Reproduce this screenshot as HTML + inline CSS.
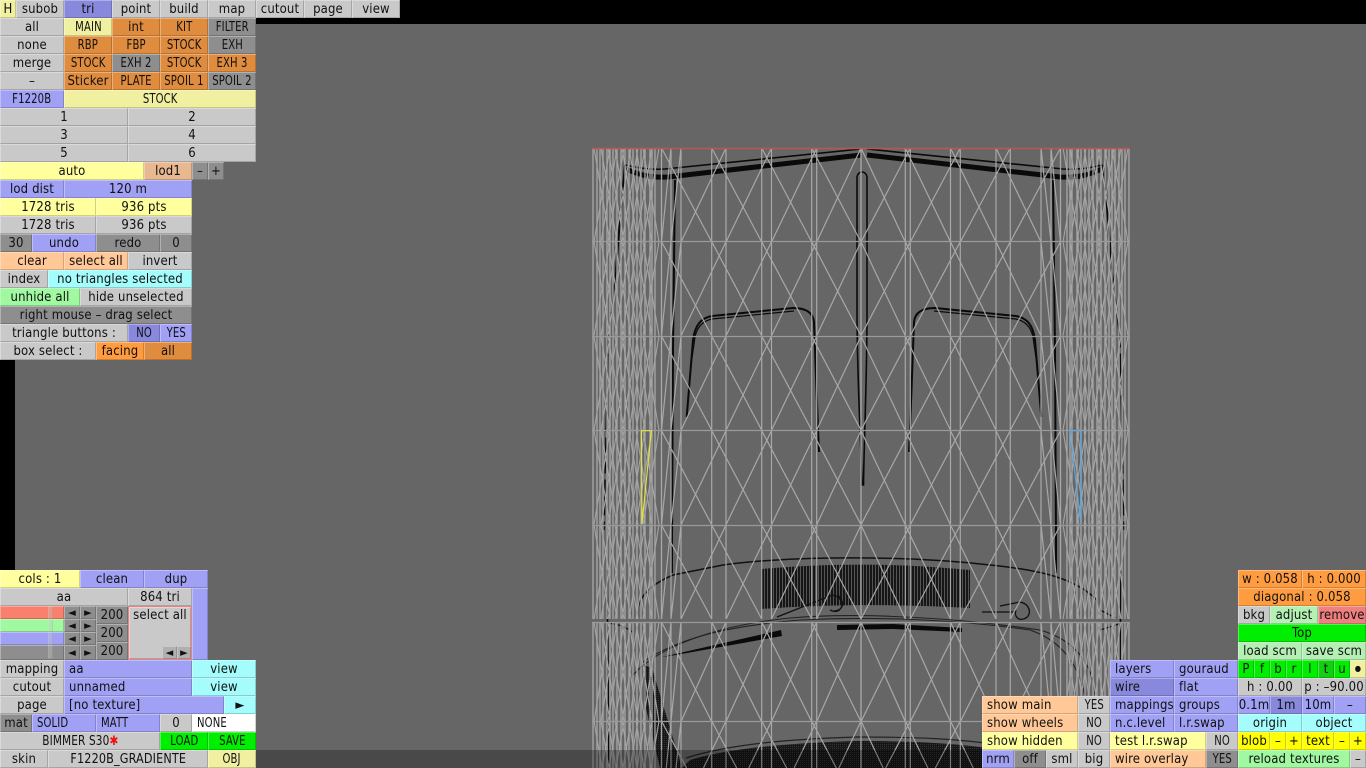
<!DOCTYPE html>
<html><head><meta charset="utf-8"><style>
html,body{margin:0;padding:0;width:1366px;height:768px;overflow:hidden;background:#666}
#b,svg{filter:blur(.3px)}
#b div{position:absolute;height:18px;box-sizing:border-box;line-height:20px;text-align:center;white-space:nowrap;overflow:hidden;color:#111;
font-family:"DejaVu Sans Condensed","DejaVu Sans",sans-serif;font-stretch:condensed;font-size:13px;letter-spacing:.15px;
box-shadow:inset 1px 1px 0 rgba(255,255,255,.32),inset -1px -1px 0 rgba(0,0,0,.18)}
#b .l{text-align:left;padding-left:5px}
#b i{font-style:normal;display:inline-block;transform:scaleX(.86)}
#b .l i{transform-origin:left center}
#b .m{font-size:11px}
.g{background:#c9c9c9}.o{background:#e08c3e}.d{background:#8e8e8e}.p{background:#a0a0f5}.a{background:#8888dc}
.y{background:#f0f0a0}.w{background:#ffff9e}.t{background:#e8b890}.k{background:#ffc896}.c{background:#a4fcfc}
.n{background:#a0f8a0}.v{background:#00ee00}.f{background:#ff9c40}.x{background:#fff}.s{background:#b4f0b4}.r{background:#f08080}.e{background:#ffff00}.q{background:#10d010}
svg{position:absolute;left:0;top:0}
</style></head><body>
<svg width="1366" height="768" viewBox="0 0 1366 768" fill="none">
<defs>
<g id="row" fill="none">
<path stroke="#a8a8a8" stroke-width="1.3" d="M593 0V94M597 0V94M600 0V94M603 0V94M607 0V94M610 0V94M613 0V94M617 0V94M621 0V94M625 0V94M629 0V94M633 0V94M637 0V94M641 0V94M645 0V94M650 0V94M652 0V94M655 0V94M661.5 0V94"/>
<path stroke="#a8a8a8" stroke-width="1.2" d="M671 0V94M681 0V94M711.7 0V94M726 0V94M761.7 0V94M771.5 0V94M811.7 0V94M816.7 0V94M861 0V94M681 94L726 0M726 94L771.5 0M771.5 94L816.7 0M816.7 94L861 0M661.5 0L711.7 94M711.7 0L761.7 94M761.7 0L811.7 94M811.7 0L861 94M671 0L661.5 94M681 0L671 94"/>
<path stroke="#a4a4a4" stroke-width="1.1" d="M594 94L610 0M601 94L617 0M608 94L624 0M615 94L631 0M622 94L638 0M629 94L645 0M636 94L652 0M643 94L659 0M594 0L610 94M601 0L617 94M608 0L624 94M615 0L631 94M622 0L638 94M629 0L645 94M636 0L652 94M643 0L659 94"/>
</g>
<g id="last" fill="none">
<path stroke="#a8a8a8" stroke-width="1.3" d="M593 0V47M597 0V47M600 0V47M603 0V47M607 0V47M610 0V47M613 0V47M617 0V47M621 0V47M625 0V47M629 0V47M633 0V47M637 0V47M641 0V47M645 0V47M650 0V47M652 0V47M655 0V47M661.5 0V47"/>
<path stroke="#a8a8a8" stroke-width="1.2" d="M671 0V47M681 0V47M711.7 0V47M726 0V47M761.7 0V47M771.5 0V47M811.7 0V47M816.7 0V47M861 0V47M703.5 47L726 0M748.75 47L771.5 0M794.1 47L816.7 0M838.85 47L861 0M661.5 0L686.6 47M711.7 0L736.7 47M761.7 0L786.7 47M811.7 0L836.35 47M671 0L666.25 47M681 0L676 47"/>
<path stroke="#a4a4a4" stroke-width="1.1" d="M602 47L610 0M609 47L617 0M616 47L624 0M623 47L631 0M630 47L638 0M637 47L645 0M644 47L652 0M651 47L659 0M594 0L602 47M601 0L609 47M608 0L616 47M615 0L623 47M622 0L630 47M629 0L637 47M636 0L644 47M643 0L651 47"/>
</g>
<g id="h1">
<path d="M625 165C640 168 650 170 665 169L861 149" stroke="#0a0a0a" stroke-width="1.6"/>
<path d="M626 169C640 175 650 178 668 177L861 155" stroke="#0a0a0a" stroke-width="5"/>
<path d="M686.7 417L693 340C695 325 701 318 712 316L793 308C805 308 813 312 814 322L816.5 390L819 452" stroke="#0a0a0a" stroke-width="2"/>
<path d="M691 365L695 337C697 327 703 321 712 319L794 311" stroke="#0a0a0a" stroke-width="1.2"/>
<path d="M675 180L673 350L672 540V573" stroke="#0a0a0a" stroke-width="2"/>
<path d="M625 165L621 207L616 270" stroke="#0a0a0a" stroke-width="2"/>
<path d="M616 270L608 340L604 530" stroke="#0a0a0a" stroke-width="1.4" stroke-dasharray="36 6"/>
<path d="M607 570L609 768" stroke="#0a0a0a" stroke-width="1.6"/>
</g>
<pattern id="st" width="3" height="3" patternUnits="userSpaceOnUse"><rect width="2" height="3" fill="#161616"/><rect x="2" width="1" height="3" fill="#555"/></pattern>
<pattern id="ht" width="2" height="2" patternUnits="userSpaceOnUse"><rect width="2" height="2" fill="#161616"/><rect width="1" height="1" fill="#333"/></pattern>
</defs>
<rect x="0" y="0" width="1366" height="24" fill="#000"/>
<rect x="0" y="360" width="15" height="210" fill="#000"/>
<use href="#h1"/>
<use href="#h1" transform="translate(1728 0) scale(-1 1)"/>
<path d="M857 310V178C857 170 867 170 867 178V310C867 380 864 440 863.5 485C863 485 862 485 862 485C861 440 857 380 857 310Z" stroke="#0a0a0a" stroke-width="1.6"/>
<path d="M761 569C830 563 900 563 970 570V608C900 604 830 604 761 609Z" fill="url(#st)"/>
<path d="M637 612C640 595 650 585 673 575L723 565C790 556 900 555 990 565C1040 570 1075 578 1097 600" stroke="#111" stroke-width="1.5"/>
<path d="M1100 610L1116 618" stroke="#111" stroke-width="1.4"/>
<path d="M608 623C618 624 626 627 632 632M1100 630L1122 623" stroke="#111" stroke-width="1.2"/>
<path d="M777 617L830 596C836 593 844 601 842 606C840 611 836 613 830 610" stroke="#111" stroke-width="1.4"/>
<path d="M838 595C845 602 844 610 834 611" stroke="#111" stroke-width="1.2"/>
<path d="M1000 606L1020 602C1030 604 1032 614 1026 618C1018 622 1014 616 1016 610M982 612L1016 612" stroke="#111" stroke-width="1.3"/>
<path d="M662 657L781 630L782 636L670 656Z" fill="#0a0a0a"/>
<path d="M837 625L893 624L962 628V632L893 629L837 630Z" fill="#0a0a0a"/>
<path d="M633 675C660 645 720 625 790 618C860 612 960 618 1040 630C1075 640 1095 665 1095 700" stroke="#222" stroke-width="1.1"/>
<path d="M643 662C680 637 730 626 800 620C880 616 960 620 1030 630C1065 642 1085 670 1088 720" stroke="#222" stroke-width="1.1"/>
<path d="M686 758C730 744 790 739 857 737C920 737 960 739 1000 745" stroke="#222" stroke-width="1.2"/>
<path d="M682 768L690 760C730 748 790 743 857 741C930 741 970 745 1000 750V768Z" fill="url(#ht)"/>
<path d="M644 665L652 668L682 768H660L644 700Z" fill="url(#ht)"/>
<path d="M1063 768L1075 725L1084 768Z" fill="url(#ht)"/>
<g id="hh">
<use href="#row" transform="translate(0 148)"/><use href="#row" transform="translate(0 241.7)"/><use href="#row" transform="translate(0 336.2)"/><use href="#row" transform="translate(0 430.7)"/><use href="#row" transform="translate(0 525)"/><use href="#row" transform="translate(0 622)scale(1 1.06)"/><use href="#last" transform="translate(0 721)"/>
</g>
<use href="#hh" transform="translate(1722 0) scale(-1 1)"/>
<path stroke="#9a9a9a" stroke-width="1.2" d="M592 241.5H1130M592 336.5H1130M592 430.5H1130M592 525.5H1130M592 622.5H1130M592 721.5H1130"/>
<path d="M592 148.5H1130" stroke="#c05454" stroke-width="1.4"/>
<path d="M641.5 430.7H651.3L642 524Z" stroke="#e6e640" stroke-width="1.1"/>
<path d="M1070 430.7H1080.7V523Z" stroke="#5aaae6" stroke-width="1.1"/>
<rect x="256" y="750" width="726" height="18" fill="#000" fill-opacity=".28"/>
</svg>
<div id="b">
<div class="y" style="left:0;top:0;width:16px">H</div>
<div class="g" style="left:16px;top:0;width:48px">subob</div>
<div class="a" style="left:64px;top:0;width:48px">tri</div>
<div class="g" style="left:112px;top:0;width:48px">point</div>
<div class="g" style="left:160px;top:0;width:48px">build</div>
<div class="g" style="left:208px;top:0;width:48px">map</div>
<div class="g" style="left:256px;top:0;width:48px">cutout</div>
<div class="g" style="left:304px;top:0;width:48px">page</div>
<div class="g" style="left:352px;top:0;width:48px">view</div>

<div class="g" style="left:0;top:18px;width:64px">all</div>
<div class="y" style="left:64px;top:18px;width:48px"><i>MAIN</i></div>
<div class="o" style="left:112px;top:18px;width:48px">int</div>
<div class="o" style="left:160px;top:18px;width:48px"><i>KIT</i></div>
<div class="d" style="left:208px;top:18px;width:48px"><i>FILTER</i></div>

<div class="g" style="left:0;top:36px;width:64px">none</div>
<div class="o" style="left:64px;top:36px;width:48px"><i>RBP</i></div>
<div class="o" style="left:112px;top:36px;width:48px"><i>FBP</i></div>
<div class="o" style="left:160px;top:36px;width:48px"><i>STOCK</i></div>
<div class="d" style="left:208px;top:36px;width:48px"><i>EXH</i></div>

<div class="g" style="left:0;top:54px;width:64px">merge</div>
<div class="o" style="left:64px;top:54px;width:48px"><i>STOCK</i></div>
<div class="d" style="left:112px;top:54px;width:48px"><i>EXH 2</i></div>
<div class="o" style="left:160px;top:54px;width:48px"><i>STOCK</i></div>
<div class="o" style="left:208px;top:54px;width:48px"><i>EXH 3</i></div>

<div class="g" style="left:0;top:72px;width:64px">–</div>
<div class="o" style="left:64px;top:72px;width:48px">Sticker</div>
<div class="o" style="left:112px;top:72px;width:48px"><i>PLATE</i></div>
<div class="o" style="left:160px;top:72px;width:48px"><i>SPOIL 1</i></div>
<div class="d" style="left:208px;top:72px;width:48px"><i>SPOIL 2</i></div>

<div class="p" style="left:0;top:90px;width:64px"><i>F1220B</i></div>
<div class="y" style="left:64px;top:90px;width:192px"><i>STOCK</i></div>
<div class="g" style="left:0;top:108px;width:128px">1</div>
<div class="g" style="left:128px;top:108px;width:128px">2</div>
<div class="g" style="left:0;top:126px;width:128px">3</div>
<div class="g" style="left:128px;top:126px;width:128px">4</div>
<div class="g" style="left:0;top:144px;width:128px">5</div>
<div class="g" style="left:128px;top:144px;width:128px">6</div>

<div class="w" style="left:0;top:162px;width:144px">auto</div>
<div class="t" style="left:144px;top:162px;width:48px">lod1</div>
<div class="d" style="left:192px;top:162px;width:16px">–</div>
<div class="d" style="left:208px;top:162px;width:16px">+</div>

<div class="p" style="left:0;top:180px;width:64px">lod dist</div>
<div class="p" style="left:64px;top:180px;width:128px">120 m</div>
<div class="w" style="left:0;top:198px;width:96px">1728 tris</div>
<div class="w" style="left:96px;top:198px;width:96px">936 pts</div>
<div class="g" style="left:0;top:216px;width:96px">1728 tris</div>
<div class="g" style="left:96px;top:216px;width:96px">936 pts</div>
<div class="d" style="left:0;top:234px;width:32px">30</div>
<div class="p" style="left:32px;top:234px;width:64px">undo</div>
<div class="d" style="left:96px;top:234px;width:64px">redo</div>
<div class="d" style="left:160px;top:234px;width:32px">0</div>
<div class="k" style="left:0;top:252px;width:64px">clear</div>
<div class="k" style="left:64px;top:252px;width:64px">select all</div>
<div class="g" style="left:128px;top:252px;width:64px">invert</div>
<div class="g" style="left:0;top:270px;width:48px">index</div>
<div class="c" style="left:48px;top:270px;width:144px">no triangles selected</div>
<div class="n" style="left:0;top:288px;width:80px">unhide all</div>
<div class="g" style="left:80px;top:288px;width:112px">hide unselected</div>
<div class="d" style="left:0;top:306px;width:192px">right mouse – drag select</div>
<div class="g" style="left:0;top:324px;width:128px">triangle buttons :</div>
<div class="a" style="left:128px;top:324px;width:32px"><i>NO</i></div>
<div class="p" style="left:160px;top:324px;width:32px"><i>YES</i></div>
<div class="g" style="left:0;top:342px;width:96px">box select :</div>
<div class="f" style="left:96px;top:342px;width:48px">facing</div>
<div class="o" style="left:144px;top:342px;width:48px">all</div>

<div class="w" style="left:0;top:570px;width:80px">cols : 1</div>
<div class="p" style="left:80px;top:570px;width:64px">clean</div>
<div class="p" style="left:144px;top:570px;width:64px">dup</div>
<div class="g" style="left:0;top:588px;width:128px">aa</div>
<div class="g" style="left:128px;top:588px;width:64px">864 tri</div>
<div class="p" style="left:192px;top:588px;height:72px;width:16px"></div>

<div class="r" style="left:0;top:606px;height:13px;width:64px;background:#f8806c"></div>
<div class="n" style="left:0;top:619px;height:13px;width:64px"></div>
<div class="p" style="left:0;top:632px;height:13px;width:64px"></div>
<div class="d" style="left:0;top:645px;height:15px;width:64px"></div>
<div class="g" style="left:48px;top:606px;height:13px;width:5px;opacity:.35"></div>
<div class="g" style="left:48px;top:619px;height:13px;width:5px;opacity:.35"></div>
<div class="g" style="left:48px;top:632px;height:13px;width:5px;opacity:.35"></div>
<div class="g" style="left:48px;top:645px;height:14px;width:5px;opacity:.35"></div>

<div class="d m" style="left:64px;top:606px;height:13px;width:16px;line-height:13px">◄</div>
<div class="d m" style="left:80px;top:606px;height:13px;width:16px;line-height:13px">►</div>
<div class="d m" style="left:64px;top:619px;height:13px;width:16px;line-height:13px">◄</div>
<div class="d m" style="left:80px;top:619px;height:13px;width:16px;line-height:13px">►</div>
<div class="d m" style="left:64px;top:632px;height:13px;width:16px;line-height:13px">◄</div>
<div class="d m" style="left:80px;top:632px;height:13px;width:16px;line-height:13px">►</div>
<div class="d m" style="left:64px;top:645px;height:15px;width:16px;line-height:15px">◄</div>
<div class="d m" style="left:80px;top:645px;height:15px;width:16px;line-height:15px">►</div>
<div class="d" style="left:96px;top:606px;width:32px">200</div>
<div class="d" style="left:96px;top:624px;width:32px">200</div>
<div class="d" style="left:96px;top:642px;width:32px">200</div>
<div class="g" style="left:128px;top:606px;height:54px;width:64px;border:1px solid #f08080;line-height:18px">select all</div>
<div class="d m" style="left:162px;top:646px;height:13px;width:15px;line-height:13px;background:#b0b0b0">◄</div>
<div class="d m" style="left:177px;top:646px;height:13px;width:14px;line-height:13px;background:#b0b0b0">►</div>

<div class="g" style="left:0;top:660px;width:64px">mapping</div>
<div class="p l" style="left:64px;top:660px;width:128px">aa</div>
<div class="c" style="left:192px;top:660px;width:64px">view</div>
<div class="g" style="left:0;top:678px;width:64px">cutout</div>
<div class="p l" style="left:64px;top:678px;width:128px">unnamed</div>
<div class="c" style="left:192px;top:678px;width:64px">view</div>
<div class="g" style="left:0;top:696px;width:64px">page</div>
<div class="p l" style="left:64px;top:696px;width:160px">[no texture]</div>
<div class="c" style="left:224px;top:696px;width:32px">►</div>
<div class="d" style="left:0;top:714px;width:32px">mat</div>
<div class="p l" style="left:32px;top:714px;width:64px"><i>SOLID</i></div>
<div class="p l" style="left:96px;top:714px;width:64px"><i>MATT</i></div>
<div class="g" style="left:160px;top:714px;width:32px">0</div>
<div class="x l" style="left:192px;top:714px;width:64px"><i>NONE</i></div>
<div class="g" style="left:0;top:732px;width:160px"><i style="transform:scaleX(.9)">BIMMER S30<span style="color:#f01010">✱</span></i></div>
<div class="v" style="left:160px;top:732px;width:48px"><i>LOAD</i></div>
<div class="v" style="left:208px;top:732px;width:48px"><i>SAVE</i></div>
<div class="g" style="left:0;top:750px;width:48px">skin</div>
<div class="g" style="left:48px;top:750px;width:160px"><i style="transform:scaleX(.96)">F1220B_GRADIENTE</i></div>
<div class="y" style="left:208px;top:750px;width:48px"><i>OBJ</i></div>

<div class="k l" style="left:982px;top:696px;width:96px">show main</div>
<div class="g" style="left:1078px;top:696px;width:32px"><i>YES</i></div>
<div class="k l" style="left:982px;top:714px;width:96px">show wheels</div>
<div class="g" style="left:1078px;top:714px;width:32px"><i>NO</i></div>
<div class="w l" style="left:982px;top:732px;width:96px">show hidden</div>
<div class="g" style="left:1078px;top:732px;width:32px"><i>NO</i></div>
<div class="p" style="left:982px;top:750px;width:32px">nrm</div>
<div class="d" style="left:1014px;top:750px;width:32px">off</div>
<div class="g" style="left:1046px;top:750px;width:32px">sml</div>
<div class="g" style="left:1078px;top:750px;width:32px">big</div>

<div class="p l" style="left:1110px;top:660px;width:64px">layers</div>
<div class="p l" style="left:1174px;top:660px;width:64px">gouraud</div>
<div class="a l" style="left:1110px;top:678px;width:64px">wire</div>
<div class="p l" style="left:1174px;top:678px;width:64px">flat</div>
<div class="p l" style="left:1110px;top:696px;width:64px">mappings</div>
<div class="p l" style="left:1174px;top:696px;width:64px">groups</div>
<div class="p l" style="left:1110px;top:714px;width:64px">n.c.level</div>
<div class="p l" style="left:1174px;top:714px;width:64px">l.r.swap</div>
<div class="w l" style="left:1110px;top:732px;width:96px">test l.r.swap</div>
<div class="g" style="left:1206px;top:732px;width:32px"><i>NO</i></div>
<div class="k l" style="left:1110px;top:750px;width:96px">wire overlay</div>
<div class="d" style="left:1206px;top:750px;width:32px"><i>YES</i></div>

<div class="f" style="left:1238px;top:570px;width:64px">w : 0.058</div>
<div class="f" style="left:1302px;top:570px;width:64px">h : 0.000</div>
<div class="f" style="left:1238px;top:588px;width:128px">diagonal : 0.058</div>
<div class="g" style="left:1238px;top:606px;width:32px">bkg</div>
<div class="s" style="left:1270px;top:606px;width:48px">adjust</div>
<div class="r" style="left:1318px;top:606px;width:48px">remove</div>
<div class="v" style="left:1238px;top:624px;width:128px">Top</div>
<div class="s" style="left:1238px;top:642px;width:64px">load scm</div>
<div class="s" style="left:1302px;top:642px;width:64px">save scm</div>
<div class="v" style="left:1238px;top:660px;width:16px">P</div>
<div class="v" style="left:1254px;top:660px;width:16px">f</div>
<div class="v" style="left:1270px;top:660px;width:16px">b</div>
<div class="v" style="left:1286px;top:660px;width:16px">r</div>
<div class="v" style="left:1302px;top:660px;width:16px">l</div>
<div class="q" style="left:1318px;top:660px;width:16px">t</div>
<div class="v" style="left:1334px;top:660px;width:16px">u</div>
<div class="y" style="left:1350px;top:660px;width:16px;font-size:8px;line-height:18px">●</div>
<div class="g" style="left:1238px;top:678px;width:64px">h : 0.00</div>
<div class="g" style="left:1302px;top:678px;width:64px">p : –90.00</div>
<div class="p" style="left:1238px;top:696px;width:32px">0.1m</div>
<div class="a" style="left:1270px;top:696px;width:32px">1m</div>
<div class="p" style="left:1302px;top:696px;width:32px">10m</div>
<div class="p" style="left:1334px;top:696px;width:32px">–</div>
<div class="c" style="left:1238px;top:714px;width:64px">origin</div>
<div class="c" style="left:1302px;top:714px;width:64px">object</div>
<div class="e" style="left:1238px;top:732px;width:32px">blob</div>
<div class="e" style="left:1270px;top:732px;width:16px">–</div>
<div class="e" style="left:1286px;top:732px;width:16px">+</div>
<div class="e" style="left:1302px;top:732px;width:32px">text</div>
<div class="e" style="left:1334px;top:732px;width:16px">–</div>
<div class="e" style="left:1350px;top:732px;width:16px">+</div>
<div class="n" style="left:1238px;top:750px;width:112px">reload textures</div>
<div class="g" style="left:1350px;top:750px;width:16px">–</div>
</div>
</body></html>
